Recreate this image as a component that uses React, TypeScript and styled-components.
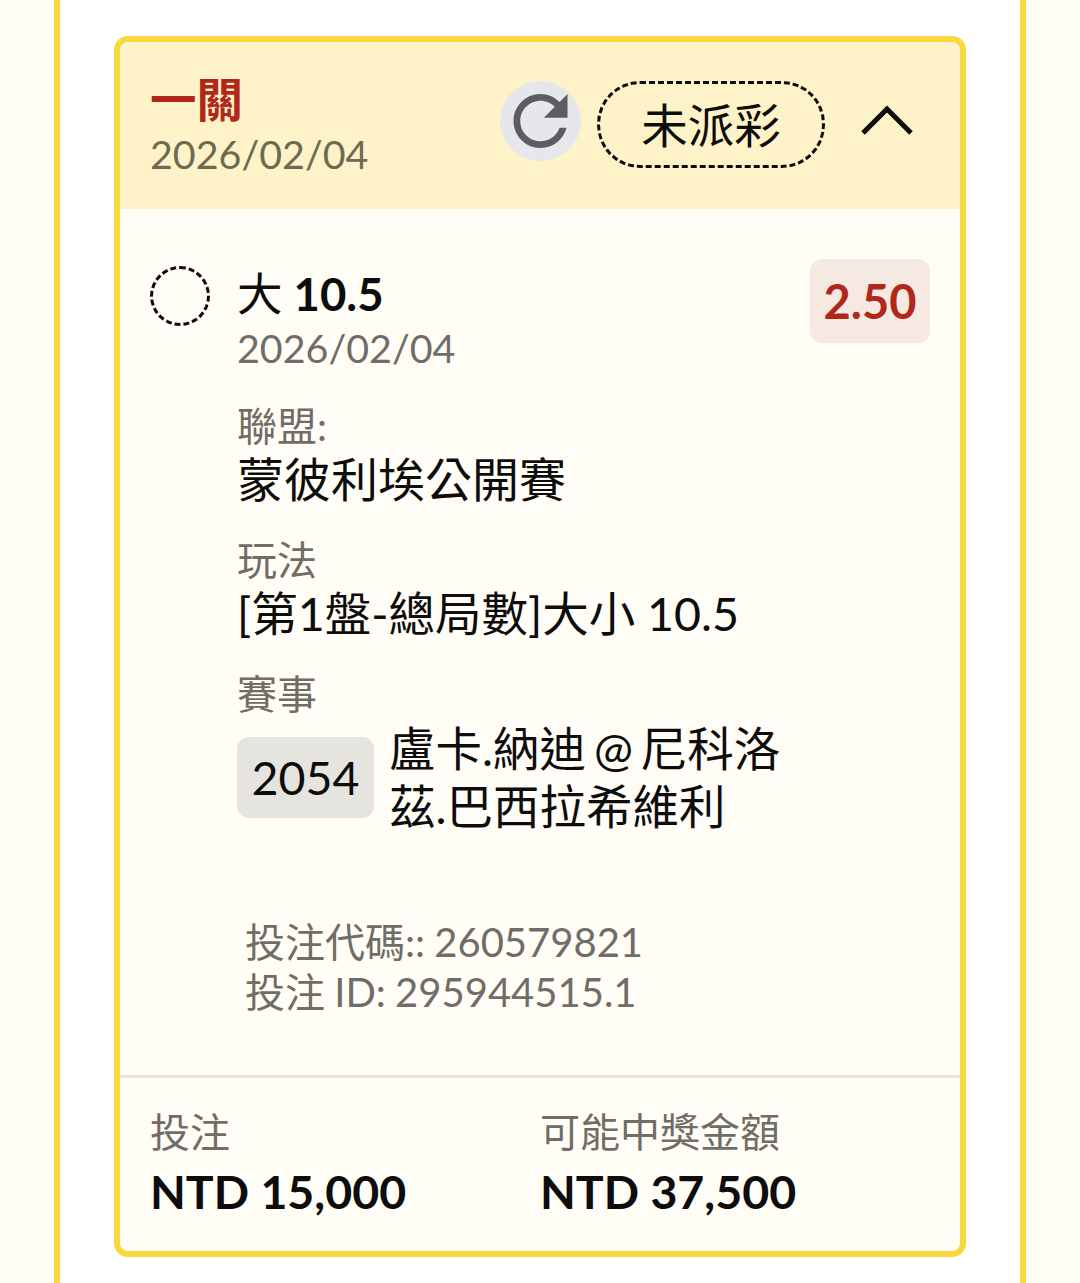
import React from 'react';
import styled, { createGlobalStyle } from 'styled-components';
import { MdRefresh } from 'react-icons/md';

const GlobalStyle = createGlobalStyle`
  html, body {
    margin: 0;
    padding: 0;
    background: #fffdf5;
  }

  body {
    font-family: Lato, 'Noto Sans CJK TC', sans-serif;
    overflow: hidden;
  }
`;

const Page = styled.div`
  width: 1080px;
  height: 1283px;
  padding: 0 54px;
  box-sizing: border-box;
  overflow: hidden;
`;

const Frame = styled.div`
  height: 100%;
  box-sizing: border-box;
  background: #fff;
  border-left: 6px solid #f7d93e;
  border-right: 6px solid #f7d93e;
  padding: 36px 54px 0;
`;

const Card = styled.div`
  height: 1221px;
  box-sizing: border-box;
  border: 6px solid #f7d93e;
  border-radius: 14px;
  background: #fffdf5;
  overflow: hidden;
`;

const Header = styled.div`
  height: 167px;
  box-sizing: border-box;
  background: #fef3c8;
  padding: 31px 47px 0 30px;
  display: flex;
  justify-content: space-between;
  align-items: flex-start;
`;

const TitleBlock = styled.div`
  display: flex;
  flex-direction: column;
`;

const Title = styled.div`
  color: #b0281a;
  font-size: 46.5px;
  font-weight: 700;
  line-height: 52px;
  margin-bottom: 4px;
`;

const HeaderDate = styled.div`
  color: #6e6a50;
  font-size: 39.4px;
  line-height: 50px;
`;

const HeaderActions = styled.div`
  display: flex;
  align-items: flex-start;
  padding-top: 8px;
`;

const RefreshButton = styled.div`
  width: 81px;
  height: 80px;
  border-radius: 50%;
  background: #e5e7eb;
  color: #5c5d60;
  display: flex;
  align-items: center;
  justify-content: center;
  margin-right: 16px;
`;

const StatusPill = styled.div`
  width: 228px;
  height: 87px;
  box-sizing: border-box;
  border: 3px dashed #0d0d0d;
  border-radius: 43px;
  padding-top: 2px;
  font-size: 46.5px;
  line-height: 1;
  color: #0d0d0d;
  display: flex;
  align-items: center;
  justify-content: center;
  margin-right: 36px;
`;

const Chevron = styled.svg`
  width: 52px;
  height: 30px;
  margin-top: 24px;
  fill: none;
  stroke: #0d0d0d;
  stroke-width: 5;
`;

const Body = styled.div`
  height: 866px;
  box-sizing: border-box;
  padding: 55px 30px 0;
  display: flex;
  align-items: flex-start;
`;

const StatusDot = styled.div`
  width: 60px;
  height: 60px;
  box-sizing: border-box;
  border: 3px dashed #0d0d0d;
  border-radius: 50%;
  margin-top: 2px;
  margin-right: 27px;
  flex-shrink: 0;
`;

const Selection = styled.div`
  flex: 1;
  min-width: 0;
`;

const SelectionName = styled.div`
  font-size: 45.5px;
  font-weight: 700;
  line-height: 59px;
  color: #0d0d0d;

  > span {
    font-weight: 400;
  }
`;

const SelectionDate = styled.div`
  font-size: 39.4px;
  line-height: 50px;
  color: #6f6d66;
`;

const Field = styled.div`
  margin-top: 29px;
`;

const FieldLabel = styled.div`
  font-size: 40px;
  line-height: 49px;
  color: #6f6d66;
`;

const FieldValue = styled.div<{ $wide?: boolean }>`
  font-size: ${(p) => (p.$wide ? '47px' : '46.5px')};
  line-height: 56px;
  color: #0d0d0d;
`;

const MatchRow = styled.div`
  display: flex;
  align-items: center;
`;

const MatchCode = styled.div`
  width: 137px;
  height: 81px;
  border-radius: 12px;
  background: #e6e4df;
  color: #0d0d0d;
  font-size: 46.5px;
  display: flex;
  align-items: center;
  justify-content: center;
  margin-right: 15px;
  flex-shrink: 0;
`;

const MatchName = styled.div`
  width: 400px;
  font-size: 46.5px;
  line-height: 58px;
  word-spacing: -4px;
  color: #0d0d0d;
`;

const Meta = styled.div`
  margin: 82px 0 0 8px;
  font-size: 40px;
  line-height: 50px;
  word-spacing: -1px;
  color: #6f6d66;
`;

const Odds = styled.div`
  width: 120px;
  height: 84px;
  margin-top: -5px;
  border-radius: 12px;
  background: #f6e9e2;
  color: #b0281a;
  font-size: 47px;
  font-weight: 700;
  display: flex;
  align-items: center;
  justify-content: center;
  flex-shrink: 0;
`;

const Footer = styled.div`
  border-top: 3px solid #e6e4df;
  padding: 29px 30px 0;
  display: grid;
  grid-template-columns: 390px 1fr;
`;

const Stat = styled.div`
  display: flex;
  flex-direction: column;
`;

const StatLabel = styled.div`
  font-size: 40px;
  line-height: 51px;
  color: #6f6d66;
`;

const StatValue = styled.div`
  font-size: 46.5px;
  font-weight: 700;
  line-height: 66px;
  color: #0d0d0d;
`;

export default function App() {
  return (
    <>
      <GlobalStyle />
      <Page>
        <Frame>
          <Card>
            <Header>
              <TitleBlock>
                <Title>一關</Title>
                <HeaderDate>2026/02/04</HeaderDate>
              </TitleBlock>
              <HeaderActions>
                <RefreshButton>
                  <MdRefresh size={82} />
                </RefreshButton>
                <StatusPill>未派彩</StatusPill>
                <Chevron viewBox="0 0 52 30">
                  <path d="M2 28 L26 4 L50 28" />
                </Chevron>
              </HeaderActions>
            </Header>
            <Body>
              <StatusDot />
              <Selection>
                <SelectionName>
                  <span>大</span> 10.5
                </SelectionName>
                <SelectionDate>2026/02/04</SelectionDate>
                <Field>
                  <FieldLabel>聯盟:</FieldLabel>
                  <FieldValue $wide>蒙彼利埃公開賽</FieldValue>
                </Field>
                <Field>
                  <FieldLabel>玩法</FieldLabel>
                  <FieldValue>[第1盤-總局數]大小 10.5</FieldValue>
                </Field>
                <Field>
                  <FieldLabel>賽事</FieldLabel>
                  <MatchRow>
                    <MatchCode>2054</MatchCode>
                    <MatchName>盧卡.納迪 @ 尼科洛茲.巴西拉希維利</MatchName>
                  </MatchRow>
                </Field>
                <Meta>
                  <div>投注代碼:: 260579821</div>
                  <div>投注 ID: 295944515.1</div>
                </Meta>
              </Selection>
              <Odds>2.50</Odds>
            </Body>
            <Footer>
              <Stat>
                <StatLabel>投注</StatLabel>
                <StatValue>NTD 15,000</StatValue>
              </Stat>
              <Stat>
                <StatLabel>可能中獎金額</StatLabel>
                <StatValue>NTD 37,500</StatValue>
              </Stat>
            </Footer>
          </Card>
        </Frame>
      </Page>
    </>
  );
}
